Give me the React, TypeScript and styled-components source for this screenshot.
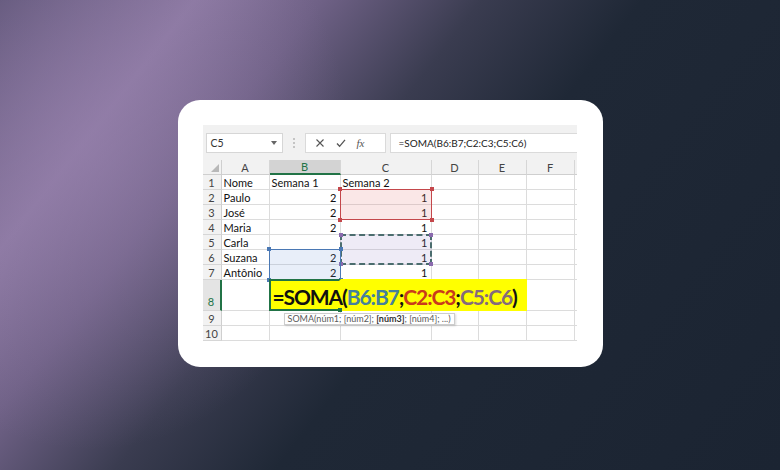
import React from 'react';
import styled, { createGlobalStyle, css } from 'styled-components';

const GlobalStyle = createGlobalStyle`
  html, body {
    margin: 0;
    padding: 0;
  }
  body {
    width: 780px;
    height: 470px;
    overflow: hidden;
    font-family: Lato, "Liberation Sans", sans-serif;
  }
`;

const GREEN = '#217346';

const Backdrop = styled.div`
  width: 780px;
  height: 470px;
  display: flex;
  align-items: center;
  justify-content: center;
  background:
    radial-gradient(ellipse 260px 300px at 90px 150px, rgba(150, 128, 172, 0.55), rgba(150, 128, 172, 0) 100%),
    linear-gradient(
      128deg,
      #5c5375 0%,
      #8c79a2 17%,
      #6f6186 28%,
      #3a3c50 42%,
      #1f2836 56%,
      #1b2432 100%
    );
`;

const Card = styled.div`
  width: 425px;
  height: 267px;
  box-sizing: border-box;
  padding: 25px 26px 25px 25px;
  margin-top: -3px;
  border-radius: 22px;
  background: #fff;
`;

const Excel = styled.div`
  width: 374px;
  display: flex;
  flex-direction: column;
  overflow: hidden;
  background: #fff;
`;

const Toolbar = styled.div`
  height: 35px;
  box-sizing: border-box;
  display: flex;
  align-items: flex-start;
  padding: 8px 0 0 3px;
  background: #f1f1f1;
`;

const NameBox = styled.div`
  width: 77px;
  height: 20px;
  box-sizing: border-box;
  display: flex;
  align-items: center;
  justify-content: space-between;
  padding: 0 5px 0 4px;
  background: #fff;
  border: 1px solid #d6d6d6;
  font-size: 10.5px;
  color: #333;
`;

const Grip = styled.div`
  width: 22px;
  height: 20px;
  display: flex;
  align-items: center;
  justify-content: center;
`;

const FxGroup = styled.div`
  width: 81px;
  height: 20px;
  box-sizing: border-box;
  display: flex;
  align-items: center;
  gap: 11px;
  padding-left: 9px;
  background: #fff;
  border: 1px solid #dadada;
`;

const FxLabel = styled.span`
  font-family: "Liberation Serif", serif;
  font-style: italic;
  font-size: 11px;
  color: #555;
  width: 10px;
`;

const FormulaBox = styled.div`
  flex: 1;
  height: 20px;
  box-sizing: border-box;
  margin-left: 4px;
  padding-left: 8px;
  background: #fff;
  border: 1px solid #dadada;
  border-right: none;
  font-size: 10px;
  line-height: 18px;
  color: #222;
  white-space: nowrap;
`;

const Sheet = styled.div`
  position: relative;
  display: grid;
  grid-template-columns: 19px 48px 71px 91px 47px 48px 48px 1fr;
  grid-template-rows: repeat(8, 15px) 31px 15px 15px;
`;

type Pos = { $r: number | string; $c: number | string };

const placed = css<Pos>`
  grid-row: ${p => p.$r};
  grid-column: ${p => p.$c};
  box-sizing: border-box;
`;

const Cell = styled.div<Pos & { $right?: boolean }>`
  ${placed};
  display: flex;
  align-items: center;
  justify-content: ${p => (p.$right ? 'flex-end' : 'flex-start')};
  padding: 1px 3px 0 2px;
  border-right: 1px solid #dcdcdc;
  border-bottom: 1px solid #dcdcdc;
  font-size: 11px;
  color: #111;
  white-space: nowrap;
`;

const ColHead = styled.div<Pos & { $active?: boolean }>`
  ${placed};
  display: flex;
  align-items: center;
  justify-content: center;
  background: ${p => (p.$active ? '#d3d3d3' : '#f2f2f2')};
  border-right: 1px solid #d6d6d6;
  border-bottom: ${p => (p.$active ? `2px solid ${GREEN}` : '1px solid #cfcfcf')};
  font-size: 11px;
  color: ${p => (p.$active ? GREEN : '#444')};
`;

const RowHead = styled.div<Pos & { $active?: boolean }>`
  ${placed};
  display: flex;
  align-items: ${p => (p.$active ? 'flex-end' : 'center')};
  justify-content: center;
  padding-bottom: ${p => (p.$active ? '2px' : '0')};
  background: ${p => (p.$active ? '#e4e4e4' : '#f2f2f2')};
  border-right: ${p => (p.$active ? `2px solid ${GREEN}` : '1px solid #cfcfcf')};
  border-bottom: 1px solid #d6d6d6;
  font-size: 11px;
  color: ${p => (p.$active ? GREEN : '#444')};
`;

const Corner = styled.div<Pos>`
  ${placed};
  display: flex;
  align-items: flex-end;
  justify-content: flex-end;
  padding: 0 2px 2px 0;
  background: #f2f2f2;
  border-right: 1px solid #cfcfcf;
  border-bottom: 1px solid #cfcfcf;
`;

type Kind = 'red' | 'purple' | 'blue' | 'active';

const rangeStyles: Record<Kind, ReturnType<typeof css>> = {
  red: css`
    background: rgba(226, 120, 120, 0.18);
    border: 1.5px solid #c4474b;
  `,
  purple: css`
    background: rgba(150, 130, 200, 0.16);
    border: 2px dashed #4b6d6e;
  `,
  blue: css`
    background: rgba(110, 150, 215, 0.16);
    border: 1.5px solid #4a78b4;
  `,
  active: css`
    border: 2px solid ${GREEN};
    border-right-color: transparent;
    z-index: 3;
  `,
};

const Range = styled.div<Pos & { $kind: Kind }>`
  ${placed};
  position: relative;
  margin: -1px 0 0 -1px;
  z-index: 1;
  pointer-events: none;
  ${p => rangeStyles[p.$kind]};
`;

const Handle = styled.span<{ $x: 'left' | 'right'; $y: 'top' | 'bottom'; $color: string }>`
  position: absolute;
  width: 4px;
  height: 4px;
  ${p => p.$x}: -3px;
  ${p => p.$y}: -3px;
  background: ${p => p.$color};
`;

const Highlight = styled.div<Pos>`
  ${placed};
  z-index: 2;
  display: flex;
  align-items: center;
  padding: 2px 0 0 3px;
  margin-top: -1px;
  background: #ffff00;
  font-weight: 700;
  font-size: 21px;
  letter-spacing: -1.1px;
  white-space: nowrap;
`;

const Part = styled.span<{ $color: string }>`
  color: ${p => p.$color};
`;

const Tooltip = styled.div`
  position: absolute;
  left: 81px;
  top: 153px;
  z-index: 4;
  height: 12px;
  box-sizing: border-box;
  padding: 0 3px;
  background: #fff;
  border: 1px solid #cdcdcd;
  box-shadow: 1px 1px 2px rgba(0, 0, 0, 0.15);
  font-size: 9px;
  line-height: 10px;
  color: #5a5a5a;
  white-space: nowrap;

  b {
    color: #333;
  }
`;

const columns = ['A', 'B', 'C', 'D', 'E', 'F', ''];

const data: string[][] = [
  ['Nome', 'Semana 1', 'Semana 2'],
  ['Paulo', '2', '1'],
  ['José', '2', '1'],
  ['Maria', '2', '1'],
  ['Carla', '', '1'],
  ['Suzana', '2', '1'],
  ['Antônio', '2', '1'],
];

const corners = (color: string) => (
  <>
    <Handle $x="left" $y="top" $color={color} />
    <Handle $x="right" $y="top" $color={color} />
    <Handle $x="left" $y="bottom" $color={color} />
    <Handle $x="right" $y="bottom" $color={color} />
  </>
);

export default function App() {
  const rowNumbers = Array.from({ length: 10 }, (_, i) => i + 1);

  return (
    <>
      <GlobalStyle />
      <Backdrop>
        <Card>
          <Excel>
            <Toolbar>
              <NameBox>
                <span>C5</span>
                <svg width="6" height="4" viewBox="0 0 6 4">
                  <path d="M0 0h6L3 4z" fill="#666" />
                </svg>
              </NameBox>
              <Grip>
                <svg width="2" height="10" viewBox="0 0 2 10">
                  <rect x="0" y="0" width="2" height="2" fill="#c4c4c4" />
                  <rect x="0" y="4" width="2" height="2" fill="#c4c4c4" />
                  <rect x="0" y="8" width="2" height="2" fill="#c4c4c4" />
                </svg>
              </Grip>
              <FxGroup>
                <svg width="10" height="10" viewBox="0 0 10 10">
                  <path d="M1.5 1.5l7 7M8.5 1.5l-7 7" stroke="#555" strokeWidth="1.1" />
                </svg>
                <svg width="10" height="10" viewBox="0 0 10 10">
                  <path d="M1 5.5l2.6 2.8L9 1.8" stroke="#555" strokeWidth="1.3" fill="none" />
                </svg>
                <FxLabel>fx</FxLabel>
              </FxGroup>
              <FormulaBox>=SOMA(B6:B7;C2:C3;C5:C6)</FormulaBox>
            </Toolbar>

            <Sheet>
              <Corner $r={1} $c={1}>
                <svg width="8" height="8" viewBox="0 0 8 8">
                  <path d="M8 0v8H0z" fill="#b8b8b8" />
                </svg>
              </Corner>
              {columns.map((letter, i) => (
                <ColHead key={i} $r={1} $c={i + 2} $active={letter === 'B'}>
                  {letter}
                </ColHead>
              ))}

              {rowNumbers.map(r => (
                <React.Fragment key={r}>
                  <RowHead $r={r + 1} $c={1} $active={r === 8}>
                    {r}
                  </RowHead>
                  {columns.map((_, c) => {
                    const value = data[r - 1]?.[c] ?? '';
                    return (
                      <Cell key={c} $r={r + 1} $c={c + 2} $right={r > 1 && c > 0}>
                        {value}
                      </Cell>
                    );
                  })}
                </React.Fragment>
              ))}

              <Range $r="3 / 5" $c={4} $kind="red">
                {corners('#c4474b')}
              </Range>
              <Range $r="6 / 8" $c={4} $kind="purple">
                {corners('#8a6aae')}
              </Range>
              <Range $r="7 / 9" $c={3} $kind="blue">
                {corners('#4a78b4')}
              </Range>

              <Highlight $r={9} $c="3 / 7">
                <Part $color="#111">=SOMA(</Part>
                <Part $color="#44809d">B6:B7</Part>
                <Part $color="#111">;</Part>
                <Part $color="#c93b1c">C2:C3</Part>
                <Part $color="#111">;</Part>
                <Part $color="#846a7e">C5:C6</Part>
                <Part $color="#111">)</Part>
              </Highlight>
              <Range $r={9} $c={3} $kind="active">
                <Handle $x="right" $y="bottom" $color={GREEN} />
              </Range>

              <Tooltip>
                SOMA(núm1; [núm2]; <b>[núm3]</b>; [núm4]; ...)
              </Tooltip>
            </Sheet>
          </Excel>
        </Card>
      </Backdrop>
    </>
  );
}
